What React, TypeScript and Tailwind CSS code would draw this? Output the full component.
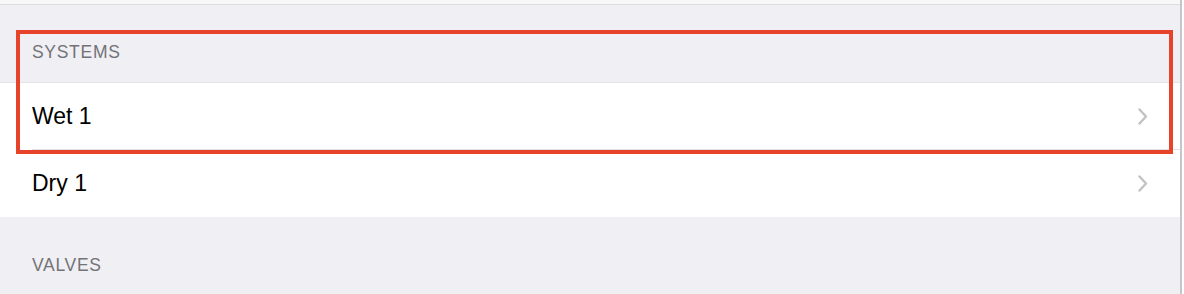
import React from 'react';

const Chevron: React.FC = () => (
  <svg width="10" height="17" viewBox="0 0 10 17" fill="none" className="shrink-0">
    <polyline points="1.5,1.5 8,8.5 1.5,15.5" stroke="#c2c2c5" strokeWidth="2.4" strokeLinecap="round" strokeLinejoin="round" />
  </svg>
);

interface RowProps {
  label: string;
  separator?: boolean;
}

const Row: React.FC<RowProps> = ({ label, separator }) => (
  <div className="relative h-[67px] bg-white flex items-center justify-between pl-[32px] pr-[32px]">
    <span className="text-[23px] text-black leading-none">{label}</span>
    <Chevron />
    {separator && <div className="absolute left-[32px] right-0 bottom-0 h-px bg-[#e0e0e3]" />}
  </div>
);

const SectionHeader: React.FC<{ title: string; className?: string }> = ({ title, className }) => (
  <div className={`px-[32px] text-[17.5px] tracking-[0.7px] text-[#737377] leading-[20px] ${className ?? ''}`}>
    {title}
  </div>
);

export default function App() {
  return (
    <div
      className="relative w-[1184px] h-[294px] overflow-hidden flex bg-white"
      style={{ fontFamily: '"Liberation Sans", Arial, sans-serif' }}
    >
      <div className="w-[1180px] h-full flex flex-col bg-[#efeff4]">
        <div className="h-[5px] bg-[#f8f8f9] border-b border-[#dcdcdf]" />
        <SectionHeader title="SYSTEMS" className="pt-[37px] pb-[20px]" />
        <div className="h-px bg-[#e4e4e7]" />
        <Row label="Wet 1" separator />
        <Row label="Dry 1" />
        <SectionHeader title="VALVES" className="pt-[38px]" />
      </div>
      <div className="w-[2px] h-full bg-[#c6c6ca]" />
      <div className="flex-1 h-full bg-white" />

      <div className="absolute left-[16px] top-[30px] w-[1157px] h-[124px] border-4 border-[#e7432b] pointer-events-none" />
    </div>
  );
}
